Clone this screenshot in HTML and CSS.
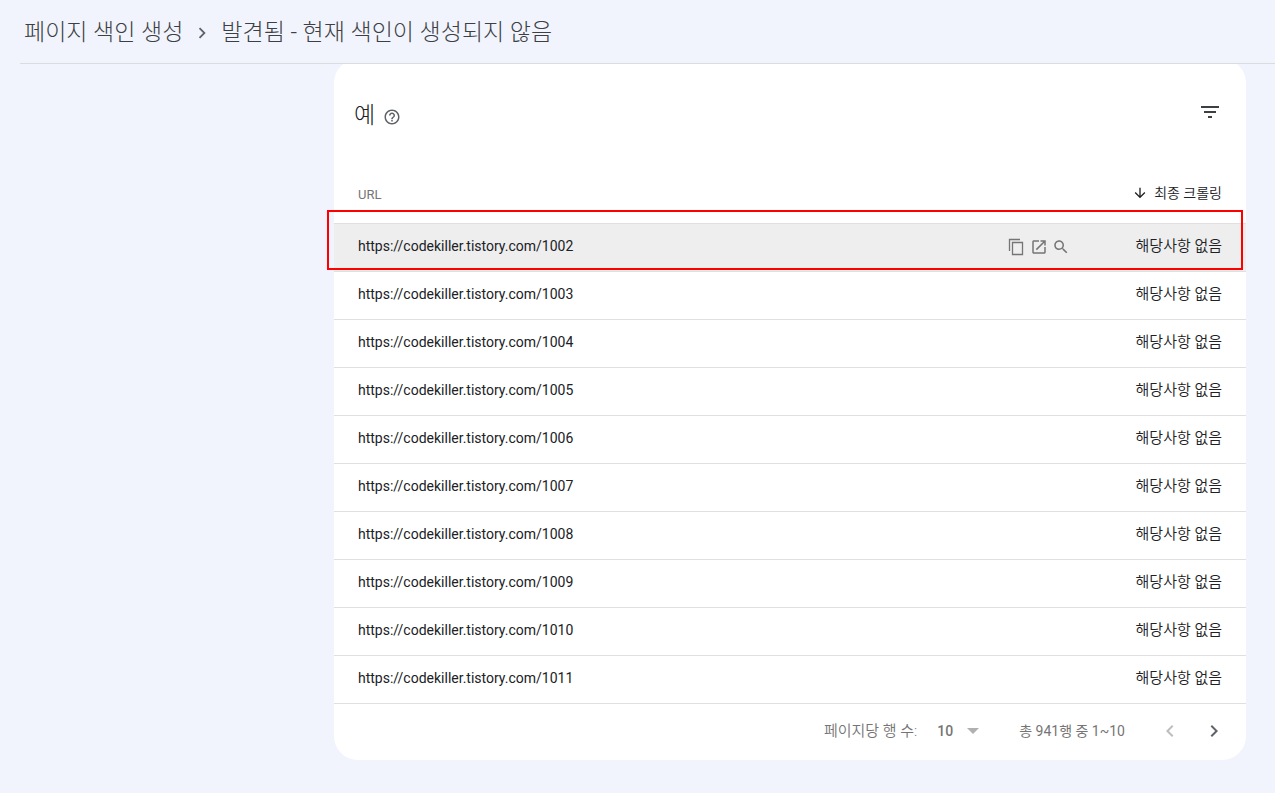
FILE: index.html
```html
<!DOCTYPE html>
<html lang="ko">
<head>
<meta charset="utf-8">
<meta name="viewport" content="width=device-width, initial-scale=1">
<title>페이지 색인 생성</title>
<link rel="stylesheet" href="styles.css">
</head>
<body>
<header class="topbar">
  <nav class="crumbs" aria-label="탐색경로">
    <a class="crumb" href="#">페이지 색인 생성</a>
    <svg class="crumb-sep" viewBox="0 0 24 24" aria-hidden="true"><path d="M10 6L8.590 7.410 13.170 12l-4.580 4.590L10 18l6-6z"/></svg>
    <span class="crumb">발견됨 - 현재 색인이 생성되지 않음</span>
  </nav>
</header>
<main class="content">
  <section class="card">
    <div class="card-head">
      <h1 class="card-title">예</h1>
      <button class="icon-btn help" type="button" aria-label="도움말"><svg viewBox="0 0 24 24"><path d="M11 18h2v-2h-2v2zm1-16C6.480 2 2 6.480 2 12s4.480 10 10 10 10-4.480 10-10S17.520 2 12 2zm0 18c-4.410 0-8-3.590-8-8s3.590-8 8-8 8 3.590 8 8-3.590 8-8 8zm0-14c-2.210 0-4 1.790-4 4h2c0-1.100.9-2 2-2s2 .9 2 2c0 2-3 1.750-3 5h2c0-2.250 3-2.500 3-5 0-2.210-1.790-4-4-4z"/></svg></button>
      <button class="icon-btn filter" type="button" aria-label="필터"><svg viewBox="0 0 24 24"><path d="M10 18h4v-2h-4v2zM3 6v2h18V6H3zm3 7h12v-2H6v2z"/></svg></button>
    </div>
    <div class="table-wrap">
      <table class="urls">
        <thead>
          <tr>
            <th class="col-url" scope="col">URL</th>
            <th class="col-date" scope="col"><button class="sort" type="button"><svg viewBox="0 0 24 24" aria-hidden="true"><path d="M20 12l-1.410-1.410L13 16.170V4h-2v12.170l-5.580-5.590L4 12l8 8 8-8z"/></svg>최종 크롤링</button></th>
          </tr>
        </thead>
        <tbody>
          <tr class="active">
            <td><div class="url-cell"><span>https://codekiller.tistory.com/1002</span>
              <span class="tools">
                <button class="icon-btn tool copy" type="button" aria-label="복사"><svg viewBox="0 0 18 18"><path d="M1.500 13V1.500H12M4.500 4.500h10v12h-10z"/></svg></button>
                <button class="icon-btn tool" type="button" aria-label="새 탭에서 열기"><svg viewBox="0 0 24 24"><path d="M19 19H5V5h7V3H5c-1.110 0-2 .9-2 2v14c0 1.100.89 2 2 2h14c1.100 0 2-.9 2-2v-7h-2v7zM14 3v2h3.590l-9.830 9.830 1.410 1.410L19 6.410V10h2V3h-7z"/></svg></button>
                <button class="icon-btn tool" type="button" aria-label="URL 검사"><svg viewBox="0 0 24 24"><path d="M15.500 14h-.79l-.28-.27C15.410 12.590 16 11.110 16 9.500 16 5.910 13.090 3 9.500 3S3 5.910 3 9.500 5.910 16 9.500 16c1.610 0 3.090-.59 4.230-1.570l.27.28v.79l5 4.990L20.490 19l-4.990-5zm-6 0C7.010 14 5 11.990 5 9.500S7.010 5 9.500 5 14 7.010 14 9.500 11.990 14 9.500 14z"/></svg></button>
              </span></div></td>
            <td class="col-date">해당사항 없음</td>
          </tr>
          <tr><td>https://codekiller.tistory.com/1003</td><td class="col-date">해당사항 없음</td></tr>
          <tr><td>https://codekiller.tistory.com/1004</td><td class="col-date">해당사항 없음</td></tr>
          <tr><td>https://codekiller.tistory.com/1005</td><td class="col-date">해당사항 없음</td></tr>
          <tr><td>https://codekiller.tistory.com/1006</td><td class="col-date">해당사항 없음</td></tr>
          <tr><td>https://codekiller.tistory.com/1007</td><td class="col-date">해당사항 없음</td></tr>
          <tr><td>https://codekiller.tistory.com/1008</td><td class="col-date">해당사항 없음</td></tr>
          <tr><td>https://codekiller.tistory.com/1009</td><td class="col-date">해당사항 없음</td></tr>
          <tr><td>https://codekiller.tistory.com/1010</td><td class="col-date">해당사항 없음</td></tr>
          <tr><td>https://codekiller.tistory.com/1011</td><td class="col-date">해당사항 없음</td></tr>
        </tbody>
      </table>
      <div class="highlight" aria-hidden="true"></div>
    </div>
    <div class="pager">
      <label for="rows">페이지당 행 수:</label>
      <span class="select-box">
        <select id="rows" class="rows"><option>10</option><option>25</option><option>50</option></select>
        <svg class="caret" viewBox="0 0 12 6" aria-hidden="true"><path d="M0 0h12L6 6z"/></svg>
      </span>
      <span class="range">총 941행 중 1~10</span>
      <button class="icon-btn page" type="button" aria-label="이전" disabled><svg viewBox="0 0 24 24"><path d="M15.410 7.410L14 6l-6 6 6 6 1.410-1.410L10.830 12z"/></svg></button>
      <button class="icon-btn page" type="button" aria-label="다음"><svg viewBox="0 0 24 24"><path d="M10 6L8.590 7.410 13.170 12l-4.580 4.590L10 18l6-6z"/></svg></button>
    </div>
  </section>
</main>
</body>
</html>
```
FILE: styles.css
```css
* {
  box-sizing: border-box;
}

body {
  margin: 0;
  min-height: 100vh;
  background: #f1f4fd;
  color: #202124;
  font-family: Roboto, "Noto Sans CJK KR", sans-serif;
  font-size: 14px;
  line-height: 20px;
}

button,
select {
  border: 0;
  padding: 0;
  background: none;
  color: inherit;
  font: inherit;
}

svg {
  display: block;
  fill: currentColor;
}

.topbar {
  margin-left: 20px;
  height: 64px;
  padding: 0 4px;
  border-bottom: 1px solid #dadce0;
}

.crumbs {
  display: flex;
  align-items: center;
  gap: 8px;
  height: 63px;
  padding-top: 2px;
}

.crumb {
  color: #3c4043;
  font-size: 23px;
  line-height: 28px;
  font-weight: 300;
  text-decoration: none;
}

.crumb-sep {
  width: 22px;
  height: 24px;
  color: #5f6368;
}

.content {
  overflow: hidden;
  padding: 0 29px 33px 334px;
}

.card {
  margin-top: -5px;
  border-radius: 24px;
  background: #fff;
}

.card-head {
  display: flex;
  align-items: center;
  height: 107px;
  padding: 0 24px 0 20px;
}

.card-title {
  margin: 6px 0 0;
  font-size: 23px;
  line-height: 28px;
  font-weight: 300;
}

.icon-btn {
  flex: none;
  color: #5f6368;
}

.help {
  margin-left: 8px;
  padding-top: 8px;
}

.help svg {
  width: 18px;
  height: 18px;
}

.filter {
  margin-left: auto;
  padding-bottom: 2px;
  color: #3c4043;
}

.filter svg {
  width: 24px;
  height: 24px;
}

.table-wrap {
  position: relative;
}

.urls {
  width: 100%;
  border-collapse: separate;
  border-spacing: 0;
}

.urls th {
  height: 58px;
  padding: 0 24px;
  border-bottom: 1px solid #e0e0e0;
  color: #757575;
  font-size: 13px;
  font-weight: 400;
  text-align: left;
}

.urls td {
  height: 48px;
  padding: 0 24px 4px;
  border-bottom: 1px solid #e0e0e0;
}

.urls .col-date {
  width: 160px;
  text-align: right;
  white-space: nowrap;
}

.urls td.col-date {
  font-size: 15px;
  font-weight: 350;
}

.active {
  background: #eee;
}

.sort {
  display: inline-flex;
  align-items: center;
  gap: 6px;
  color: #202124;
  font-size: 14px;
  font-weight: 350;
}

.sort svg {
  width: 16px;
  height: 16px;
}

.url-cell {
  display: flex;
  align-items: center;
  justify-content: space-between;
}

.tools {
  display: flex;
  align-items: center;
  gap: 4px;
  margin-right: -8px;
  padding-top: 2px;
}

.tool {
  color: #757575;
}

.tool svg {
  width: 18px;
  height: 18px;
}

.copy svg {
  fill: none;
  stroke: currentColor;
  stroke-width: 1.3;
}

.highlight {
  position: absolute;
  top: 44px;
  left: -7px;
  right: 3px;
  height: 60px;
  border: 2px solid #f00;
  pointer-events: none;
}

.pager {
  display: flex;
  align-items: center;
  justify-content: flex-end;
  height: 56px;
  padding: 0 20px 2px 0;
  color: #757575;
}

.pager label {
  font-size: 15px;
  font-weight: 350;
}

.select-box {
  display: flex;
  align-items: center;
  margin-left: 20px;
}

.rows {
  appearance: none;
  width: 42px;
  margin-right: -12px;
  font-weight: 500;
}

.caret {
  width: 12px;
  height: 6px;
  color: #b0b0b0;
  pointer-events: none;
}

.range {
  margin-left: 40px;
}

.page {
  margin-left: 20px;
}

.range + .page {
  margin-left: 33px;
}

.page svg {
  width: 24px;
  height: 24px;
}

.page:disabled {
  color: #bdbdbd;
}
```
